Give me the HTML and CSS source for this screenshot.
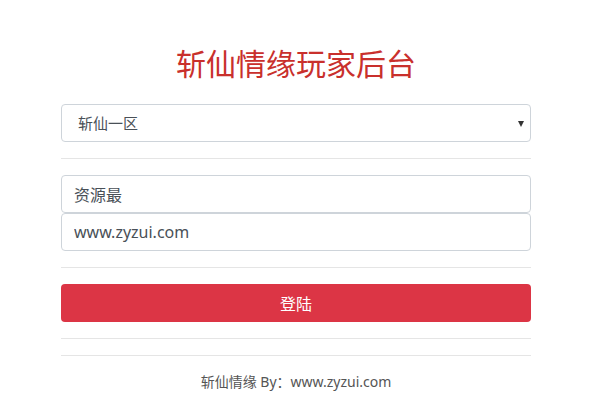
FILE: index.html
```html
<!DOCTYPE html>
<html>
  <head>
    <meta charset="UTF-8" />
    <title>斩仙情缘玩家后台</title>
    <link rel="stylesheet" href="styles.css">
  </head>
  <body>
    <main class="login">
      <h1 class="login-title">斩仙情缘玩家后台</h1>

      <div class="select-wrap">
        <select class="zone-select">
          <option>斩仙一区</option>
          <option>斩仙二区</option>
        </select>
        <span class="select-arrow"></span>
      </div>

      <hr class="line" />

      <div class="fields">
        <input class="field" type="text" value="资源最" />
        <input class="field" type="text" value="www.zyzui.com" />
      </div>

      <hr class="line" />

      <button class="login-button">登陆</button>

      <hr class="line" />
      <hr class="line" />

      <p class="footer">斩仙情缘 By：www.zyzui.com</p>
    </main>
  </body>
</html>
```

FILE: styles.css
```css
body {
  margin: 0;
  background-color: #fff;
  font-family: "Noto Sans", "Noto Sans CJK SC", sans-serif;
  color: #495057;
}

.login {
  width: 470px;
  margin-left: 61px;
  padding-top: 46px;
}

.login-title {
  margin: 0 0 22px;
  font-size: 30px;
  line-height: 36px;
  font-weight: normal;
  text-align: center;
  color: #c9302c;
}

.select-wrap {
  position: relative;
}

.zone-select {
  display: block;
  width: 100%;
  height: 38px;
  margin: 0;
  padding: 0 30px 0 16px;
  border: 1px solid #ced4da;
  border-radius: 4px;
  background-color: #fff;
  font-family: inherit;
  font-size: 15px;
  color: #495057;
  appearance: none;
  -webkit-appearance: none;
}

.select-arrow {
  position: absolute;
  top: 17px;
  right: 7px;
  width: 0;
  height: 0;
  border-left: 3px solid transparent;
  border-right: 3px solid transparent;
  border-top: 6px solid #333;
  pointer-events: none;
}

.line {
  margin: 16px 0;
  border: 0;
  border-top: 1px solid #e5e5e5;
}

.fields {
  display: flex;
  flex-direction: column;
}

.field {
  box-sizing: border-box;
  width: 100%;
  height: 38px;
  margin: 0;
  padding: 0 12px;
  border: 1px solid #ced4da;
  border-radius: 4px;
  font-family: inherit;
  font-size: 16px;
  color: #495057;
}

.login-button {
  display: block;
  width: 100%;
  height: 38px;
  border: 0;
  border-radius: 4px;
  background-color: #dc3545;
  color: #fff;
  font-family: inherit;
  font-size: 16px;
}

.footer {
  margin: 16px 0 0;
  font-size: 14px;
  line-height: 20px;
  text-align: center;
  color: #555;
}
```
